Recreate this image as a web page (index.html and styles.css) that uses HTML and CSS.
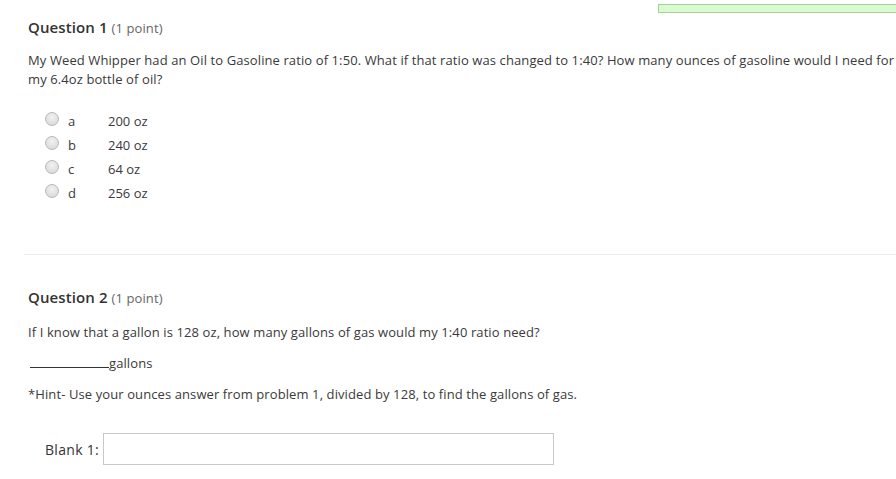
FILE: index.html
```html
<!DOCTYPE html>
<html>
<head>
<meta charset="utf-8">
<link rel="stylesheet" href="styles.css">
</head>
<body>
<div class="topbar"><div class="progress"></div></div>
<div class="page">
  <section class="question q1">
    <h2 class="qtitle">Question 1 <span class="pts">(1 point)</span></h2>
    <p class="qtext">My Weed Whipper had an Oil to Gasoline ratio of 1:50. What if that ratio was changed to 1:40? How many ounces of gasoline would I need for my 6.4oz bottle of oil?</p>
    <ul class="options">
      <li class="opt"><span class="radio"></span><span class="letter">a</span><span class="val">200 oz</span></li>
      <li class="opt"><span class="radio"></span><span class="letter">b</span><span class="val">240 oz</span></li>
      <li class="opt"><span class="radio"></span><span class="letter">c</span><span class="val">64 oz</span></li>
      <li class="opt"><span class="radio"></span><span class="letter">d</span><span class="val">256 oz</span></li>
    </ul>
  </section>
  <hr class="sep">
  <section class="question q2">
    <h2 class="qtitle">Question 2 <span class="pts">(1 point)</span></h2>
    <p class="qtext first">If I know that a gallon is 128 oz, how many gallons of gas would my 1:40 ratio need?</p>
    <p class="qtext blankline"><span class="blank"></span>gallons</p>
    <p class="qtext hint">*Hint- Use your ounces answer from problem 1, divided by 128, to find the gallons of gas.</p>
    <div class="answer">
      <label class="blabel">Blank 1:</label>
      <span class="inputbox"></span>
    </div>
  </section>
</div>
</body>
</html>
```
FILE: styles.css
```css
html, body {
  margin: 0;
  padding: 0;
  background: #fff;
  overflow: hidden;
}
body {
  font-family: "Open Sans", "Liberation Sans", sans-serif;
  color: #3a3a3a;
  width: 896px;
  height: 479px;
  position: relative;
}
.topbar {
  height: 0;
}
.progress {
  position: absolute;
  left: 658px;
  top: 4px;
  width: 250px;
  height: 7px;
  background: #dafbd0;
  border: 1px solid #a3d493;
}
.page {
  padding: 17px 0 0 28px;
}
.qtitle {
  margin: 0;
  font-size: 15px;
  font-weight: 600;
  line-height: 20px;
  color: #333;
  letter-spacing: 0.1px;
}
.pts {
  font-size: 13px;
  font-weight: 400;
  color: #666;
}
.qtext {
  margin: 0;
  font-size: 13px;
  line-height: 19px;
  color: #3a3a3a;
  letter-spacing: 0.1px;
}
.q1 .qtext {
  margin-top: 13px;
  width: 872px;
}
.options {
  list-style: none;
  margin: 20px 0 0 0;
  padding: 0 0 0 17px;
}
.opt {
  display: flex;
  align-items: center;
  height: 24px;
  font-size: 13px;
}
.radio {
  width: 12px;
  height: 12px;
  border-radius: 50%;
  border: 1px solid #b9b9b9;
  background: radial-gradient(circle at 50% 35%, #f2f2f2, #d4d4d4);
  margin-top: -4px;
}
.letter {
  margin-left: 9px;
  width: 40px;
}
.sep {
  border: 0;
  border-top: 1px solid #ececec;
  margin: 49px 0 0 -4px;
}
.q2 {
  padding-top: 32px;
}
.q2 .first {
  margin-top: 15px;
}
.blankline {
  margin-top: 11px;
  padding-left: 2px;
}
.hint {
  margin-top: 12px;
}
.blank {
  display: inline-block;
  width: 79px;
  border-bottom: 1px solid #333;
  height: 14px;
  vertical-align: baseline;
}
.answer {
  display: flex;
  align-items: center;
  margin-top: 29px;
  padding-left: 17px;
}
.blabel {
  font-size: 14px;
  color: #333;
  margin-right: 4px;
  letter-spacing: 0.3px;
}
.inputbox {
  display: block;
  width: 449px;
  height: 30px;
  border: 1px solid #c8c8c8;
  background: #fff;
}
```
